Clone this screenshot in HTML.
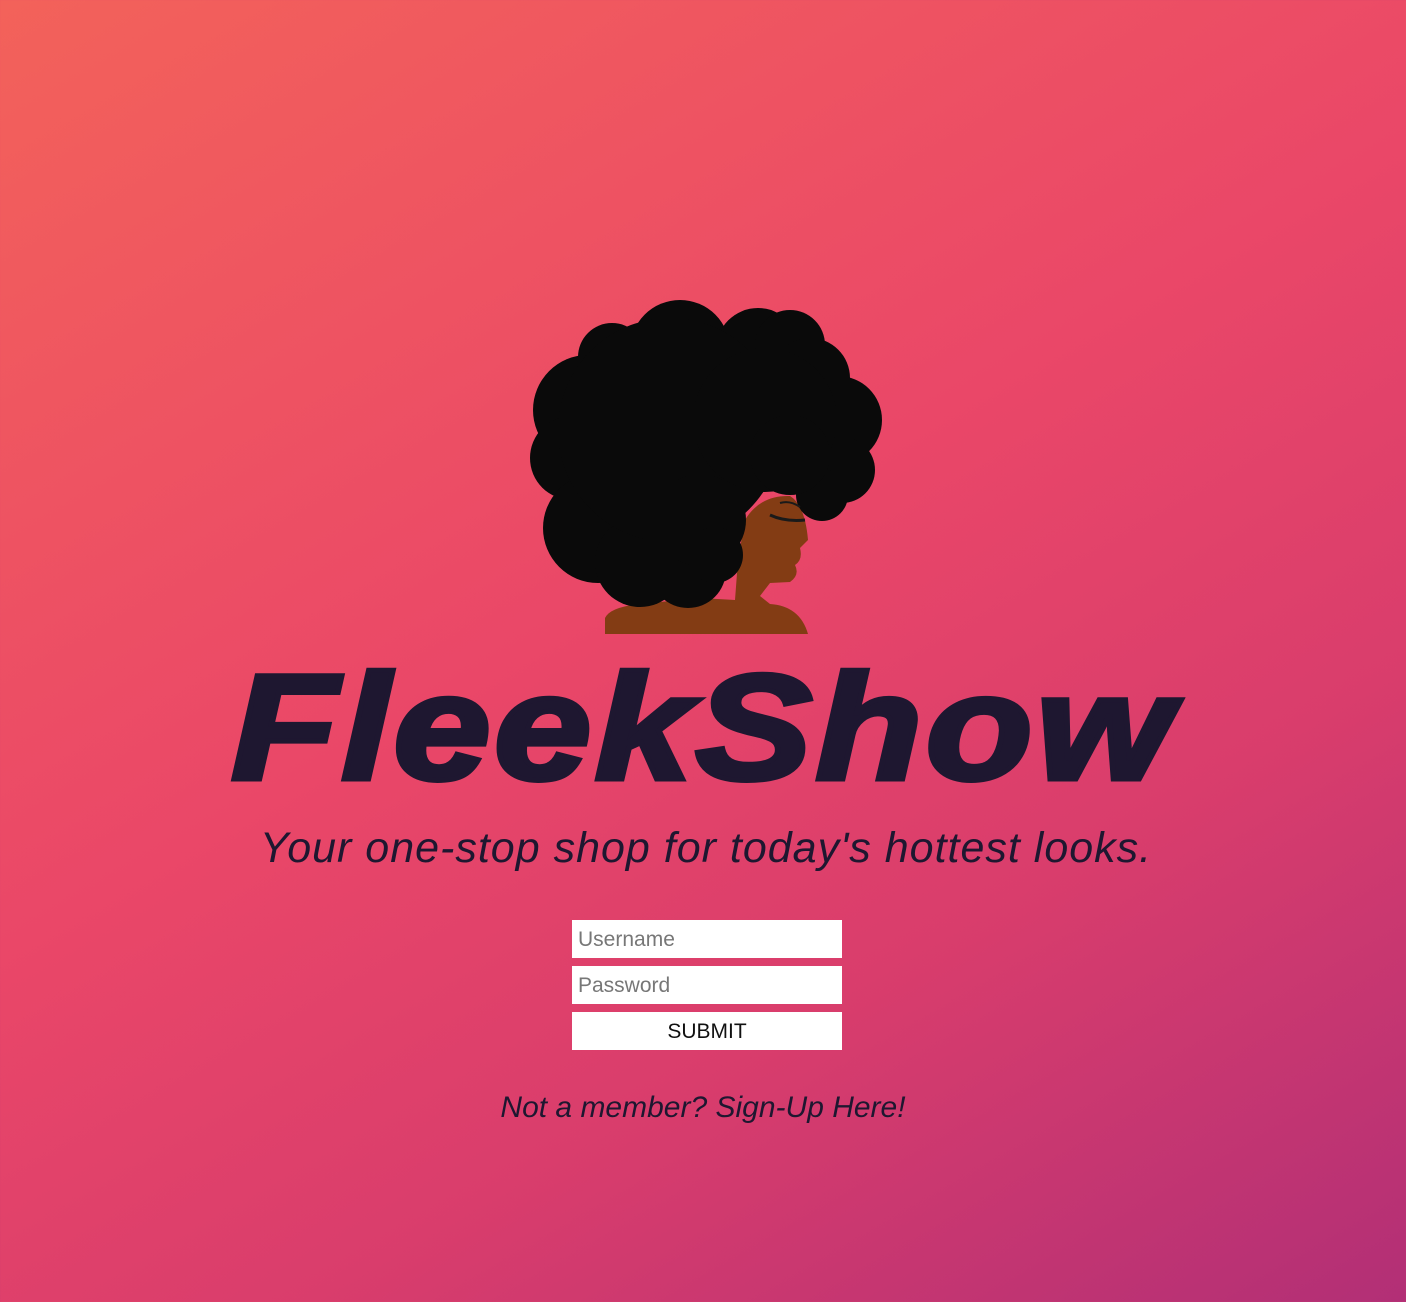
<!DOCTYPE html>
<html><head><meta charset="utf-8"><style>
html,body{margin:0;padding:0}
body{width:1406px;height:1302px;overflow:hidden;position:relative;
background:linear-gradient(150deg,#f3625a 0%,#ea4768 45%,#d93d6c 70%,#b22f76 100%);
font-family:"Liberation Sans",sans-serif;}
.t{position:absolute;left:0;width:1406px;text-align:center;color:#1e1730;white-space:nowrap}
#title{top:652px;font-size:150px;font-weight:bold;font-style:italic;line-height:1;-webkit-text-stroke:5px #1e1730;letter-spacing:3px}
#title span{display:inline-block;transform:scaleX(1.165);transform-origin:center}
#sub{top:827px;font-size:43px;font-style:italic;font-weight:normal;line-height:1;letter-spacing:1px;left:3px}
.box{position:absolute;left:572px;width:270px;height:38px;background:#fff;box-sizing:border-box;font-size:21px;line-height:40px}
.ph{color:#777;padding-left:6px}
#sign{top:1093px;font-size:30px;font-style:italic;line-height:1}
</style></head><body>
<svg style="position:absolute;left:0;top:0" width="1406" height="1302">
<g fill="#833c14">
<path d="M605,634 L605,618 Q610,607 640,604 L700,598 L735,600 L738,560 L745,520 Q760,495 790,496 Q805,505 808,540 L800,548 Q803,560 795,565 Q800,575 790,582 L770,583 L760,596 L770,604 Q800,606 808,634 Z"/>
</g>
<g fill="#0a0a0a">
<circle cx="612" cy="357" r="34"/>
<circle cx="680" cy="350" r="50"/>
<circle cx="758" cy="350" r="42"/>
<circle cx="790" cy="345" r="35"/>
<circle cx="810" cy="378" r="40"/>
<circle cx="838" cy="420" r="44"/>
<circle cx="842" cy="470" r="33"/>
<circle cx="822" cy="495" r="26"/>
<circle cx="588" cy="410" r="55"/>
<circle cx="572" cy="458" r="42"/>
<circle cx="598" cy="528" r="55"/>
<circle cx="640" cy="562" r="45"/>
<circle cx="688" cy="570" r="38"/>
<circle cx="670" cy="430" r="112"/>
<circle cx="765" cy="420" r="72"/>
<circle cx="790" cy="455" r="40"/>
<circle cx="700" cy="520" r="46"/>
<circle cx="715" cy="555" r="28"/>
</g>
<path d="M770,515 Q785,522 805,520" stroke="#1a1a1a" stroke-width="3" fill="none"/>
<path d="M780,503 Q790,500 800,507" stroke="#1a1a1a" stroke-width="2" fill="none"/>
</svg>
<div class="t" id="title"><span>FleekShow</span></div>
<div class="t" id="sub">Your one-stop shop for today's hottest looks.</div>
<div class="box ph" style="top:920px">Username</div>
<div class="box ph" style="top:966px">Password</div>
<div class="box" style="top:1012px;text-align:center;color:#111">SUBMIT</div>
<div class="t" id="sign">Not a member? Sign-Up Here!</div>
</body></html>
